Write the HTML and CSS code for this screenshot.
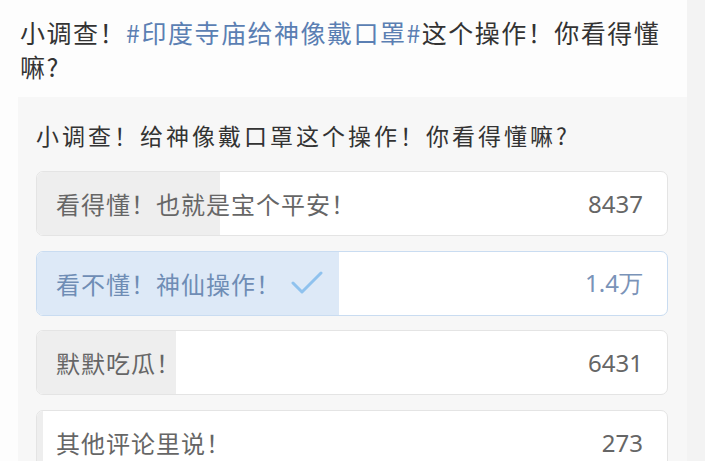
FILE: index.html
```html
<!DOCTYPE html>
<html lang="zh">
<head>
  <meta charset="UTF-8">
  <meta name="viewport" content="width=device-width, initial-scale=1.0">
  <title>小调查</title>
  <link rel="stylesheet" href="styles.css">
</head>
<body>

  <div class="main">
    <p class="post-text">小调查！<span class="topic">#印度寺庙给神像戴口罩#</span>这个操作！你看得懂嘛?</p>

    <div class="poll">
      <div class="poll-title">小调查！给神像戴口罩这个操作！你看得懂嘛?</div>

      <div class="options">
        <div class="option">
          <div class="fill" style="width: 29%"></div>
          <span class="label">看得懂！也就是宝个平安！</span>
          <span class="count">8437</span>
        </div>
        <div class="option selected">
          <div class="fill" style="width: 48%"></div>
          <span class="label">看不懂！神仙操作！
            <svg class="check" width="32" height="24" viewBox="0 0 32 24">
              <path d="M2 12 L11 21 L30 2" fill="none" stroke="#8fc2ee" stroke-width="3" stroke-linecap="round" stroke-linejoin="round"/>
            </svg>
          </span>
          <span class="count">1.4万</span>
        </div>
        <div class="option">
          <div class="fill" style="width: 22%"></div>
          <span class="label">默默吃瓜！</span>
          <span class="count">6431</span>
        </div>
        <div class="option">
          <div class="fill" style="width: 1%"></div>
          <span class="label">其他评论里说！</span>
          <span class="count">273</span>
        </div>
      </div>
    </div>
  </div>

</body>
</html>
```

FILE: styles.css
```css
body {
  font-family: "Noto Sans CJK SC", "Noto Sans", sans-serif;
  background-color: #f3f3f3; /* 右側灰邊 */
  margin: 0;
  padding: 0;
  overflow: hidden;
}

.main {
  width: 687px;
  height: 100vh;
  background-color: #fdfdfd;
}

.post-text {
  margin: 0;
  padding: 15px 20px 0 20px;
  font-size: 25px;
  line-height: 34px;
  letter-spacing: 1.5px;
  color: #333;
}

.topic {
  color: #5b7fb3;
}

.poll {
  margin: 14px 0 0 18px;
  padding: 22px 19px 0 18px;
  background-color: #f7f7f7;
  height: 400px;
}

.poll-title {
  font-size: 23px;
  line-height: 32px;
  letter-spacing: 3px;
  color: #333;
  margin-bottom: 20px;
}

.options {
  display: flex;
  flex-direction: column;
  gap: 14.5px;
}

.option {
  position: relative;
  box-sizing: border-box;
  height: 65px;
  display: flex;
  align-items: center;
  justify-content: space-between;
  padding: 0 24px 0 19px;
  background-color: #fff;
  border: 1px solid #e4e4e4;
  border-radius: 7px;
  overflow: hidden;
  color: #666;
  font-size: 24px;
}

.option .fill {
  position: absolute;
  top: 0;
  left: 0;
  bottom: 0;
  background-color: #eeeeee;
}

.label,
.count {
  position: relative; /* 蓋在進度條上 */
}

.label {
  display: flex;
  align-items: center;
  letter-spacing: 1px;
}

.count {
  font-family: "Noto Sans", sans-serif;
}

.check {
  margin-left: 10px;
}

.option.selected {
  border-color: #c9dcf1;
  color: #6f8db5;
}

.option.selected .fill {
  background-color: #dde9f7;
}

.option.selected .count {
  color: #7a93b8;
}
```
